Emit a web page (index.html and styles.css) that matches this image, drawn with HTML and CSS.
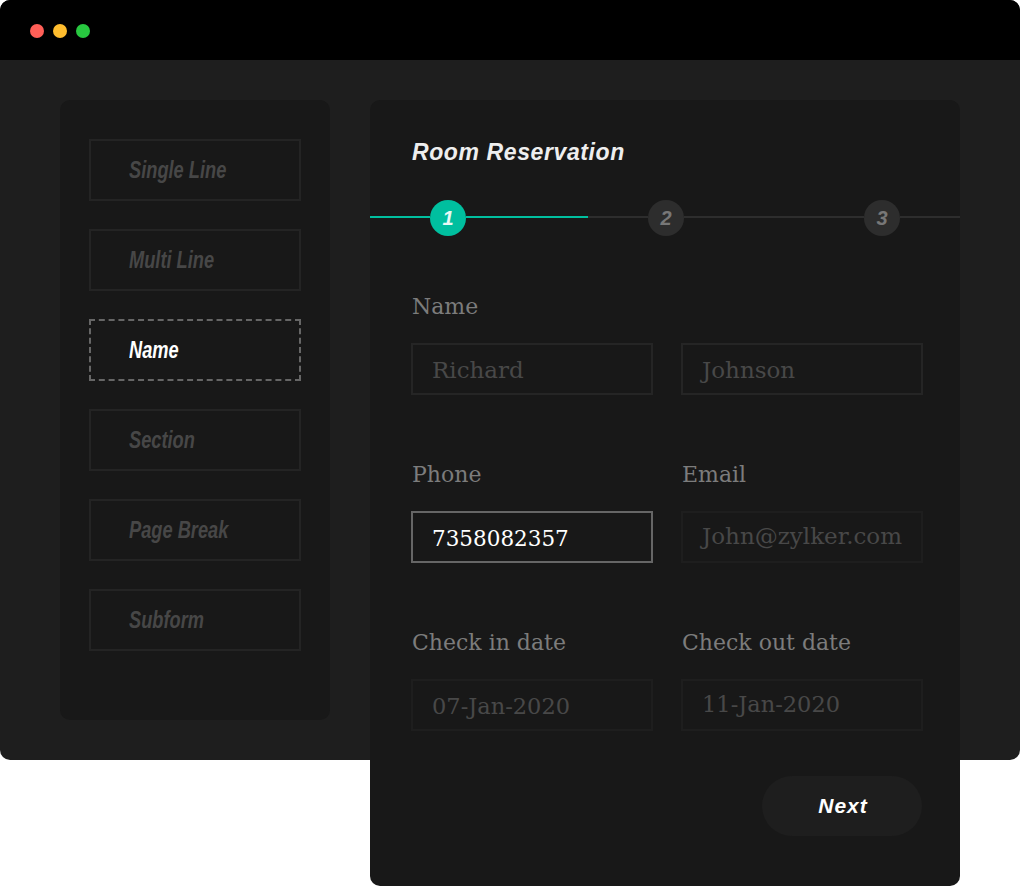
FILE: index.html
```html
<!DOCTYPE html>
<html lang="en">
<head>
<meta charset="utf-8">
<title>Room Reservation</title>
<link rel="stylesheet" href="styles.css">
</head>
<body>
<div class="window">
  <header class="titlebar">
    <span class="dot dot-red"></span>
    <span class="dot dot-yellow"></span>
    <span class="dot dot-green"></span>
  </header>
  <div class="content">
    <aside class="palette">
      <div class="tool"><span class="tool-text">Single Line</span></div>
      <div class="tool"><span class="tool-text">Multi Line</span></div>
      <div class="tool tool-active"><span class="tool-text">Name</span></div>
      <div class="tool"><span class="tool-text">Section</span></div>
      <div class="tool"><span class="tool-text">Page Break</span></div>
      <div class="tool"><span class="tool-text">Subform</span></div>
    </aside>
    <main class="panel">
      <h1 class="title">Room Reservation</h1>
      <div class="stepper">
        <span class="seg seg-a seg-on"></span>
        <span class="step step-on">1</span>
        <span class="seg seg-b seg-on"></span>
        <span class="seg seg-c"></span>
        <span class="step">2</span>
        <span class="seg seg-d"></span>
        <span class="step">3</span>
        <span class="seg seg-e"></span>
      </div>
      <form class="form">
        <div class="field">
          <div class="label">Name</div>
          <div class="input">Richard</div>
        </div>
        <div class="field">
          <div class="label">&nbsp;</div>
          <div class="input">Johnson</div>
        </div>
        <div class="field">
          <div class="label">Phone</div>
          <div class="input input-focus">7358082357</div>
        </div>
        <div class="field">
          <div class="label">Email</div>
          <div class="input input-faint input-up">John@zylker.com</div>
        </div>
        <div class="field">
          <div class="label">Check in date</div>
          <div class="input input-faint input-date">07-Jan-2020</div>
        </div>
        <div class="field">
          <div class="label">Check out date</div>
          <div class="input input-faint input-up input-date">11-Jan-2020</div>
        </div>
      </form>
      <div class="actions"><button class="next" type="button">Next</button></div>
    </main>
  </div>
</div>
</body>
</html>
```
FILE: styles.css
```css
* { box-sizing: border-box; }
html, body { margin: 0; padding: 0; background: #fff; }
body { height: 886px; overflow: hidden; }
.window { width: 1020px; height: 760px; background: #1e1e1e; border-radius: 10px; }
.titlebar { height: 60px; background: #000; border-radius: 10px 10px 0 0; display: flex; align-items: center; gap: 9px; padding: 2px 0 0 30px; }
.dot { width: 14px; height: 14px; border-radius: 50%; }
.dot-red { background: #ff5f57; }
.dot-yellow { background: #ffbd2e; }
.dot-green { background: #28c840; }
.content { display: flex; align-items: flex-start; gap: 40px; padding: 40px 60px 0; }
.palette { width: 270px; height: 620px; background: #181818; border-radius: 10px; padding: 39px 29px; display: flex; flex-direction: column; gap: 28px; }
.tool { height: 62px; border: 2px solid #242424; padding-left: 38px; display: flex; align-items: center; font-family: "Liberation Sans", sans-serif; font-style: italic; font-weight: 700; font-size: 24px; color: #474747; }
.tool-text { display: inline-block; transform: scaleX(.76); transform-origin: left center; white-space: nowrap; }
.tool-active { border: 2px dashed #666; color: #fff; }
.panel { width: 590px; height: 786px; background: #181818; border-radius: 10px; display: flex; flex-direction: column; }
.title { margin: 36px 0 0 42px; height: 32px; font-family: "Liberation Sans", sans-serif; font-style: italic; font-weight: 700; font-size: 23px; line-height: 32px; color: #eee; letter-spacing: .6px; }
.stepper { display: flex; align-items: center; height: 36px; margin-top: 32px; }
.seg { height: 2px; margin-bottom: 2px; background: #2d2d2d; }
.seg-on { background: #00bf9f; }
.seg-a { width: 60px; }
.seg-b { width: 122px; }
.seg-c { width: 60px; }
.seg-d { width: 180px; }
.seg-e { width: 60px; }
.step { width: 36px; height: 36px; border-radius: 50%; background: #2d2d2d; color: #777; display: flex; align-items: center; justify-content: center; font-family: "Liberation Sans", sans-serif; font-style: italic; font-weight: 700; font-size: 20px; }
.step-on { background: #00bf9f; color: #e8f8f4; }
.form { display: grid; grid-template-columns: 242px 242px; column-gap: 28px; row-gap: 62px; margin: 53px 0 0 41px; }
.field { display: flex; flex-direction: column; }
.label { height: 36px; margin-bottom: 18px; padding-left: 1px; font-family: "DejaVu Serif", serif; font-size: 22px; line-height: 36px; color: #7c7c7c; white-space: nowrap; }
.input { height: 52px; border: 2px solid #252525; padding: 2px 0 0 19px; display: flex; align-items: center; font-family: "DejaVu Serif", serif; font-size: 23px; color: #484848; white-space: nowrap; }
.input-faint { border-color: #1e1e1e; }
.input-up { padding: 0 0 2px 19px; }
.input-date { font-size: 22.5px; }
.input-focus { border-color: #666; color: #fff; font-size: 21.5px; }
.actions { display: flex; justify-content: flex-end; padding: 45px 38px 0 0; }
.next { width: 160px; height: 60px; border: 0; border-radius: 30px; background: #1e1e1e; color: #fff; font-family: "Liberation Sans", sans-serif; font-style: italic; font-weight: 700; font-size: 21px; padding: 0 0 0 2px; letter-spacing: 1px; }
```
